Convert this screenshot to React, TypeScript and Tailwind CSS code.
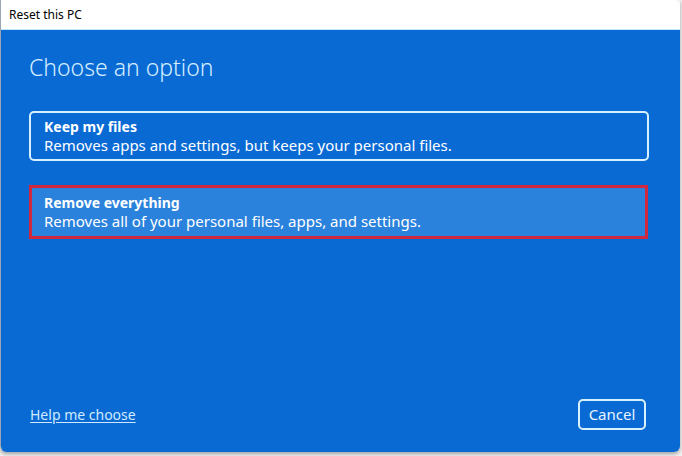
export default function App() {
  return (
    <div className="w-[682px] h-[456px] bg-[#f3f3f3] font-['Noto_Sans',sans-serif]">
      <div className="w-[680px] h-[452px] flex flex-col rounded-b-[6px] overflow-hidden border-l border-[#9aa6b3] shadow-[0_2px_4px_rgba(0,0,0,0.35)]">
        <div className="h-[30px] bg-white flex items-center pl-[8px] border-b border-[#bfe6ff] rounded-tr-[6px]">
          <span className="text-[12px] text-black">Reset this PC</span>
        </div>
        <div className="flex-1 bg-[#0a6ad4] flex flex-col pl-[28px] pr-[31px] pt-[22px] pb-[22px]">
          <h1 className="text-[23px] font-light text-[#d4eeff] leading-[30px]">Choose an option</h1>
          <div className="mt-[29px] flex flex-col gap-[24px]">
            <div className="h-[50px] border-2 border-[#d6f0ff] rounded-[5px] pl-[13px] flex flex-col justify-center">
              <div className="text-[14px] font-bold text-white leading-[19px]">Keep my files</div>
              <div className="text-[15px] text-white leading-[19px]">Removes apps and settings, but keeps your personal files.</div>
            </div>
            <div className="h-[54px] border-[3px] border-[#d0283e] bg-[#2a82dc] pl-[12px] mr-[1px] flex flex-col justify-center">
              <div className="text-[14px] font-bold text-white leading-[19px]">Remove everything</div>
              <div className="text-[15px] text-white leading-[19px]">Removes all of your personal files, apps, and settings.</div>
            </div>
          </div>
          <div className="mt-auto flex items-center justify-between">
            <a className="text-[14px] text-[#cfeaff] underline underline-offset-2 ml-[1px]">Help me choose</a>
            <button className="w-[68px] h-[31px] mr-[3px] border-2 border-[#d6f0ff] rounded-[5px] text-[15px] text-[#e6f5ff]">Cancel</button>
          </div>
        </div>
      </div>
    </div>
  );
}
